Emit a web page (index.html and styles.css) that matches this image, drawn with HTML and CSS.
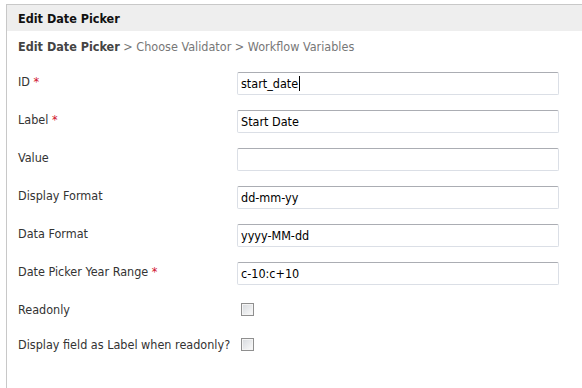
FILE: index.html
```html
<!DOCTYPE html>
<html lang="en">
<head>
  <meta charset="UTF-8">
  <title>Edit Date Picker</title>
  <link rel="stylesheet" href="styles.css">
</head>
<body>

  <div class="panel">
    <div class="panel-header">Edit Date Picker</div>

    <div class="breadcrumb">
      <span class="current">Edit Date Picker</span> &gt; Choose Validator &gt; Workflow Variables
    </div>

    <form class="props">
      <div class="row">
        <label>ID <span class="req">*</span></label>
        <!-- focused field, drawn with its text cursor -->
        <div class="field focused">start_date<span class="caret"></span></div>
      </div>
      <div class="row">
        <label>Label <span class="req">*</span></label>
        <input type="text" value="Start Date">
      </div>
      <div class="row">
        <label>Value</label>
        <input type="text" value="">
      </div>
      <div class="row">
        <label>Display Format</label>
        <input type="text" value="dd-mm-yy">
      </div>
      <div class="row">
        <label>Data Format</label>
        <input type="text" value="yyyy-MM-dd">
      </div>
      <div class="row">
        <label>Date Picker Year Range <span class="req">*</span></label>
        <input type="text" value="c-10:c+10">
      </div>
      <div class="row check">
        <label>Readonly</label>
        <input type="checkbox">
      </div>
      <div class="row check">
        <label>Display field as Label when readonly?</label>
        <input type="checkbox">
      </div>
    </form>
  </div>

</body>
</html>
```

FILE: styles.css
```css
* {
  box-sizing: border-box;
}

html, body {
  margin: 0;
  padding: 0;
  overflow: hidden;
  background: #fff;
  font-family: "DejaVu Sans Condensed", "DejaVu Sans", sans-serif;
  font-stretch: condensed;
  font-size: 12.5px;
  color: #333;
}

.panel {
  margin: 4px -20px 0 6px;
  min-height: 400px;
  border: 1px solid #c8c8c8;
}

.panel-header {
  height: 26px;
  line-height: 27px;
  padding-left: 11px;
  background-color: #eeeeee;
  font-weight: bold;
  color: #111;
}

.breadcrumb {
  padding: 7px 0 0 11px;
  height: 34px;
  line-height: 18px;
  color: #777;
}

.breadcrumb .current {
  font-weight: bold;
  color: #444;
}

.props {
  margin: 0;
  padding-left: 11px;
}

.row {
  display: flex;
  align-items: flex-start;
  padding: 7px 0 8px;
}

.row label {
  width: 219px;
  padding-top: 2px;
  line-height: 16px;
}

.req {
  color: #d0112b;
}

.row input[type="text"],
.field {
  width: 322px;
  height: 23px;
  margin: 0;
  padding: 0 3px;
  border: 1px solid #dbdfe6;
  border-top-color: #abadb3;
  border-radius: 2px;
  font-family: inherit;
  font-size: 12.5px;
  line-height: 21px;
  color: #000;
  outline: none;
}

.caret {
  display: inline-block;
  width: 1px;
  height: 15px;
  margin-left: 1px;
  vertical-align: -3px;
  background: #000;
}

.row.check {
  align-items: center;
  padding: 7px 0 10px;
}

.row.check input {
  appearance: none;
  width: 13px;
  height: 13px;
  margin: 0 0 0 4px;
  border: 1px solid #8f8f8f;
  box-shadow: inset 0 0 0 1px #f4f4f4;
  background: linear-gradient(135deg, #d6d9dd, #fbfbfb);
}
```
